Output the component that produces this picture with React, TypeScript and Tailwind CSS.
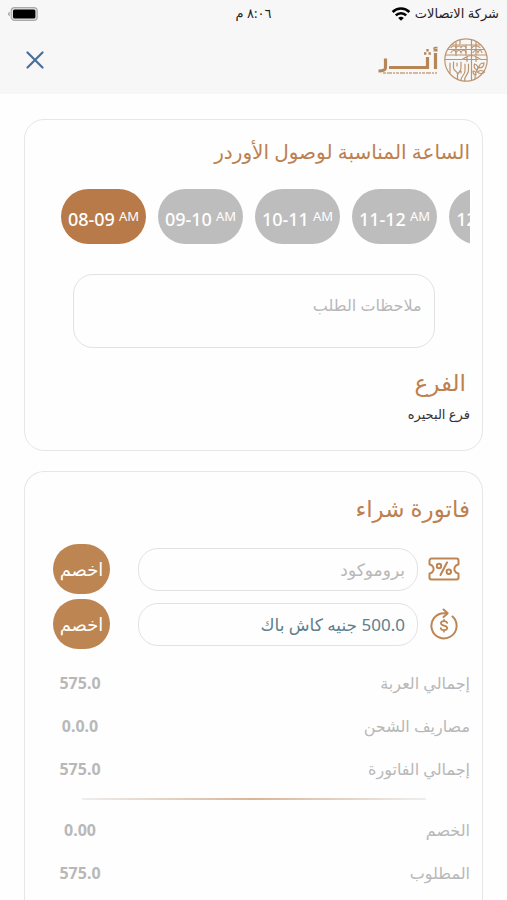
import { useState } from "react";

type Slot = {
  label: string;
  period: string;
};

const slots: Slot[] = [
  { label: "08-09", period: "AM" },
  { label: "09-10", period: "AM" },
  { label: "10-11", period: "AM" },
  { label: "11-12", period: "AM" },
  { label: "12-01", period: "PM" },
];

const totals = [
  { label: "إجمالي العربة", value: "575.0" },
  { label: "مصاريف الشحن", value: "0.0.0" },
  { label: "إجمالي الفاتورة", value: "575.0" },
];

const due = [
  { label: "الخصم", value: "0.00" },
  { label: "المطلوب", value: "575.0" },
];

const BatteryIcon = () => (
  <svg width="30" height="14" viewBox="0 0 30 14">
    <path d="M1.6 4.8v4.4C.6 8.8.2 7.9.2 7s.4-1.8 1.4-2.2Z" fill="#9a9a9a" />
    <rect x="3.2" y=".7" width="26" height="12.6" rx="3.4" fill="#e0e0e0" stroke="#a9a9a9" strokeWidth="1.2" />
    <rect x="5" y="2.5" width="22.4" height="9" rx="1.6" fill="#000" />
  </svg>
);

const WifiIcon = () => (
  <svg width="20" height="14" viewBox="0 0 20 14" fill="none" stroke="#000" strokeWidth="2.6">
    <path d="M1.6 5a12 12 0 0 1 16.8 0" />
    <path d="M4.8 8.4a7.4 7.4 0 0 1 10.4 0" />
    <path d="M10 13.8 7.2 11a4 4 0 0 1 5.6 0Z" fill="#000" stroke="none" />
  </svg>
);

const Logo = () => (
  <svg width="46" height="46" viewBox="0 0 46 46" fill="none" stroke="#bd9470" strokeWidth="1.2" strokeLinecap="round">
    <circle cx="23" cy="23" r="21.2" />
    <path d="M5 12.5h36M3 18h40M9 8h28" />
    <path d="M13 5.5v13M17 3v4M28.5 2.5v41M33 5v13M23 8v10" />
    <path d="M8 15.5c2-3 4-3 5 0 2-3 4-3 5 0 1-3 4-3 5 0M8 10.5c2-2 4-2 5 0 2-2 4-2 5 0 1-2 4-2 5 0M30 15.5c2-3 4-3 5 0 1-3 3-3 4 0M29 10.5c2-2 5-2 8 0" />
    <path d="M2.5 22.5h16c3 0 4-4 10-4s7 4 10 4h5M21 22.5h14M24 19.5v5M33 19.5v5" />
    <path d="M7 26v10M10.5 25v6c0 3 4 3 4 6v5M18 25v6c0 4-3.5 5-3.5 7M14 26v3M22 27v7c0 4-4 5-4 9M25.5 27v6c0 5-4 5-4 11M18 36v-2" />
    <path d="M32 42c0-7 2-10 5-14M34.5 33c-3-1-4-3-3-6 3 1 4 3 3 6ZM36 31c0-3 2-5 5-5 0 3-2 5-5 5ZM34.5 35c2-2 5-2 7 0-2 2-5 2-7 0ZM33 38c-2 0-3-2-3-4 2 0 3 2 3 4Z" />
  </svg>
);

const Wordmark = () => (
  <svg width="62" height="32" viewBox="0 0 62 32" fill="none" stroke="#b58658">
    <path d="M58.5 9v16M50.5 13v10.5H12M8.5 14.500v9c0 2.500-1.500 3.500-7 3.500" strokeWidth="3.200" />
    <path d="M60.500 3.500h-2.500c-1.500 0-1.500 2 0 2h2.500M56.500 6.800h4" strokeWidth="1.300" />
    <path d="M47 9.500h2.400M51.500 9.500h2.400M49.300 6.300h2.400" strokeWidth="2.400" />
    <path d="M6 29h54" strokeWidth="1.600" strokeDasharray="3 1 5 1 2 1" opacity=".75" />
  </svg>
);

const TicketIcon = () => (
  <svg width="32" height="24" viewBox="0 0 32 24" fill="none" stroke="#bd8552" strokeWidth="2" strokeLinecap="round" strokeLinejoin="round">
    <path d="M3.5 1.5h25a2 2 0 0 1 2 2v3.8l-2.500 1.200c-2.200 2-2.200 5 0 7l2.500 1.200v3.800a2 2 0 0 1-2 2h-25a2 2 0 0 1-2-2v-3.800L4 15.500c2.200-2 2.200-5 0-7L1.500 7.300V3.500a2 2 0 0 1 2-2Z" />
    <path d="m12.500 18 6.500-12.500" />
    <circle cx="11" cy="9" r="2.200" />
    <circle cx="20.800" cy="14.800" r="2.200" />
  </svg>
);

const CashbackIcon = () => (
  <svg width="30" height="32" viewBox="0 0 30 32" fill="none" stroke="#bd8552" strokeWidth="2" strokeLinecap="round" strokeLinejoin="round">
    <path d="M18 5.2h-3A12.600 12.600 0 1 0 23.500 8.500" />
    <path d="m14.500 1.500 4.200 3.700-4.200 3.800" />
    <path d="M18.200 15c-.3-1.200-1.500-1.900-3.200-1.900-1.800 0-3.100.8-3.100 2.200 0 3.200 6.300 1.500 6.300 4.700 0 1.400-1.400 2.200-3.200 2.200s-3.200-.8-3.300-2.200M15 11.800v1.300M15 22.200v1.500" strokeWidth="1.700" />
  </svg>
);

const TotalRow = ({ label, value }: { label: string; value: string }) => (
  <div className="flex h-[43px] items-center justify-between">
    <dt className="text-base">{label}</dt>
    <dd className="w-[86px] text-center text-base font-bold">{value}</dd>
  </div>
);

const App = () => {
  const [selected, setSelected] = useState(0);
  const [notes, setNotes] = useState("");
  const [promo, setPromo] = useState("");
  const [cashback, setCashback] = useState("500.0 جنيه كاش باك");

  return (
    <div
      dir="rtl"
      className="h-screen overflow-hidden bg-[#fefefe] font-['Noto_Sans','DejaVu_Sans',sans-serif] text-[#b8b8b8]"
    >
      <header className="bg-[#f7f7f7] pb-1.5">
        <div className="grid h-7 grid-cols-3 items-center px-2 text-[13px] text-[#222]">
          <div className="flex items-center gap-1">
            <span className="whitespace-nowrap">شركة الاتصالات</span>
            <WifiIcon />
          </div>
          <span className="text-center">٨:٠٦ م</span>
          <div className="flex justify-end">
            <BatteryIcon />
          </div>
        </div>
        <div className="flex h-[60px] items-center justify-between pt-1 pr-[18px] pl-[26px]">
          <a href="#" aria-label="أثر" className="flex items-center gap-1">
            <Logo />
            <Wordmark />
          </a>
          <button aria-label="إغلاق" className="cursor-pointer">
            <svg width="18" height="18" viewBox="0 0 18 18" stroke="#4a6f98" strokeWidth="2.2" strokeLinecap="round">
              <path d="m1.5 1.5 15 15M16.5 1.5l-15 15" />
            </svg>
          </button>
        </div>
      </header>

      <main className="flex flex-col gap-5 px-6 pt-[25px]">
        <section className="rounded-[20px] border border-[#e6e6e6] px-3 pt-4 pb-[22px]">
          <h2 className="text-xl leading-8 text-[#bd8050]">الساعة المناسبة لوصول الأوردر</h2>

          <div dir="ltr" className="mt-[21px] ml-6 flex gap-3 overflow-hidden">
            {slots.map((slot, i) => (
              <button
                key={slot.label}
                onClick={() => setSelected(i)}
                className={`flex h-[55px] w-[85px] shrink-0 cursor-pointer items-center justify-center gap-1 rounded-full pt-1 text-white ${
                  i === selected ? "bg-[#b87a48]" : "bg-[#bdbdbd]"
                }`}
              >
                <span className="text-lg font-medium">{slot.label}</span>
                <span className="pb-1 text-[13px]">{slot.period}</span>
              </button>
            ))}
          </div>

          <textarea
            aria-label="ملاحظات الطلب"
            placeholder="ملاحظات الطلب"
            value={notes}
            onChange={(e) => setNotes(e.target.value)}
            className="mx-auto mt-[30px] block h-[74px] w-[362px] max-w-full resize-none rounded-[20px] border border-[#e2e2e2] px-3 py-[18px] text-base placeholder:text-[#b8b8b8]"
          />

          <h2 className="mt-4 px-1 text-[23px] leading-9 text-[#bd8050]">الفرع</h2>
          <p className="text-[13px] leading-7 text-[#333]">فرع البحيره</p>
        </section>

        <section className="rounded-t-[20px] border border-b-0 border-[#e6e6e6] px-3 pt-4 pb-10">
          <h2 className="text-[23px] leading-10 text-[#bd8050]">فاتورة شراء</h2>

          <div className="mt-4 flex flex-col gap-[5px] pr-2 pl-4">
            <form className="flex items-center" onSubmit={(e) => e.preventDefault()}>
              <span className="flex w-9 justify-center">
                <TicketIcon />
              </span>
              <input
                aria-label="بروموكود"
                placeholder="بروموكود"
                value={promo}
                onChange={(e) => setPromo(e.target.value)}
                className="mr-2 h-[43px] min-w-0 flex-1 rounded-[20px] border border-[#e2e2e2] px-3 text-[17px] placeholder:text-[#b8b8b8]"
              />
              <button className="mr-7 h-[50px] w-[57px] cursor-pointer rounded-full bg-[#bd8552] text-lg text-white">
                اخصم
              </button>
            </form>
            <form className="flex items-center" onSubmit={(e) => e.preventDefault()}>
              <span className="flex w-9 justify-center">
                <CashbackIcon />
              </span>
              <input
                aria-label="كاش باك"
                value={cashback}
                onChange={(e) => setCashback(e.target.value)}
                className="mr-2 h-[43px] min-w-0 flex-1 rounded-[20px] border border-[#e2e2e2] px-3 text-[17px] text-[#5f7f8c]"
              />
              <button className="mr-7 h-[50px] w-[57px] cursor-pointer rounded-full bg-[#bd8552] text-lg text-white">
                اخصم
              </button>
            </form>
          </div>

          <dl className="mt-3">
            {totals.map((row) => (
              <TotalRow key={row.label} {...row} />
            ))}
          </dl>
          <div className="mx-auto my-2 h-0.5 w-[344px] max-w-full bg-linear-to-r from-[#eeeeee] via-[#d9b596] to-[#eeeeee]" />
          <dl>
            {due.map((row) => (
              <TotalRow key={row.label} {...row} />
            ))}
          </dl>
        </section>
      </main>
    </div>
  );
};

export default App;
